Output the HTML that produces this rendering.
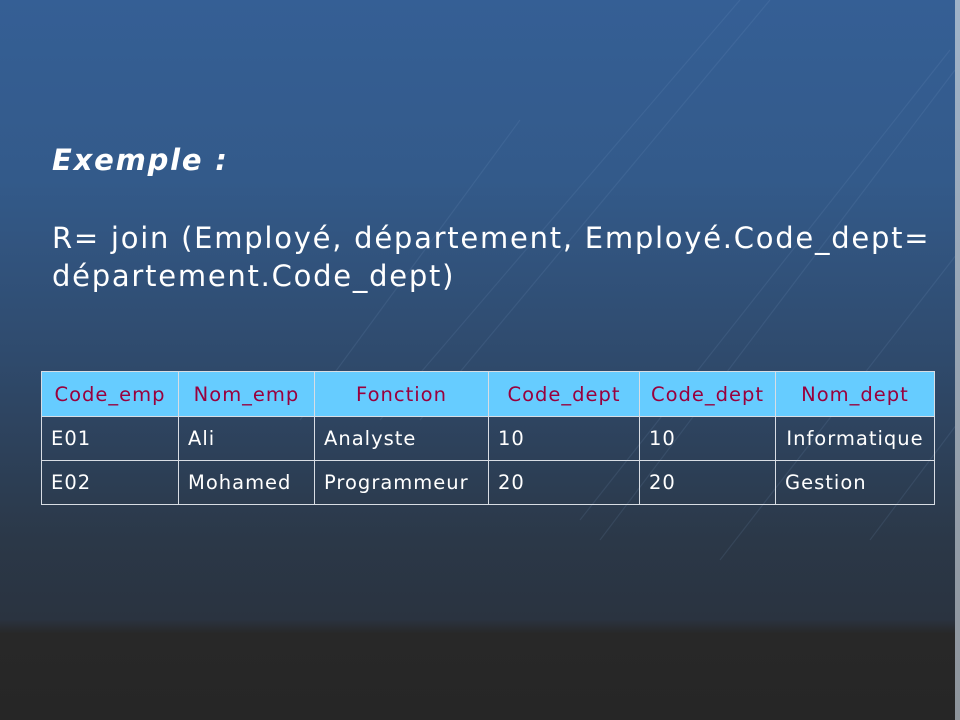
<!DOCTYPE html>
<html><head><meta charset="utf-8"><style>
*{margin:0;padding:0}
body{width:960px;height:720px;overflow:hidden;position:relative;font-family:"DejaVu Sans","Liberation Sans",sans-serif;
background:linear-gradient(180deg,#355f95 0%,#335a8a 25%,#2f4a6c 50%,#2b3848 75%,#2a3340 86%,#282828 88%,#262626 100%);}
.edge{position:absolute;left:955px;top:0;width:5px;height:720px;background:linear-gradient(180deg,#9fb3c9,#8e949b);}
.t{position:absolute;color:#fff;white-space:nowrap}
table{position:absolute;left:41px;top:371px;border-collapse:collapse;font-size:19.5px;color:#fff;letter-spacing:1px}
td{border:1.5px solid #d8dde4;height:43px;padding:0 9px;white-space:nowrap}
tr.h td{background:#66ccff;color:#99003d;text-align:center;height:44px}
</style></head><body>
<svg style="position:absolute;left:0;top:0" width="960" height="720">
<g stroke="#8fb0d6" stroke-opacity="0.12" stroke-width="1.2" fill="none">
<line x1="770" y1="0" x2="420" y2="420"/><line x1="740" y1="0" x2="380" y2="420"/>
<line x1="950" y1="50" x2="580" y2="520"/><line x1="955" y1="70" x2="600" y2="540"/>
<line x1="960" y1="250" x2="720" y2="560"/><line x1="520" y1="120" x2="300" y2="420"/>
<line x1="960" y1="420" x2="870" y2="540"/>
</g></svg>
<div class="edge"></div>
<div class="t" style="left:52px;top:143px;font-size:29px;font-weight:bold;font-style:italic;letter-spacing:1.8px">Exemple :</div>
<div class="t" style="left:52px;top:219px;font-size:29px;line-height:38px;letter-spacing:1.75px">R= join (Employé, département, Employé.Code_dept=<br>département.Code_dept)</div>
<table>
<tr class="h"><td style="width:118px">Code_emp</td><td style="width:117px">Nom_emp</td><td style="width:155px">Fonction</td><td style="width:132px">Code_dept</td><td style="width:117px">Code_dept</td><td style="width:140px">Nom_dept</td></tr>
<tr><td>E01</td><td>Ali</td><td>Analyste</td><td>10</td><td>10</td><td style="text-align:center">Informatique</td></tr>
<tr><td>E02</td><td>Mohamed</td><td>Programmeur</td><td>20</td><td>20</td><td>Gestion</td></tr>
</table>
</body></html>
